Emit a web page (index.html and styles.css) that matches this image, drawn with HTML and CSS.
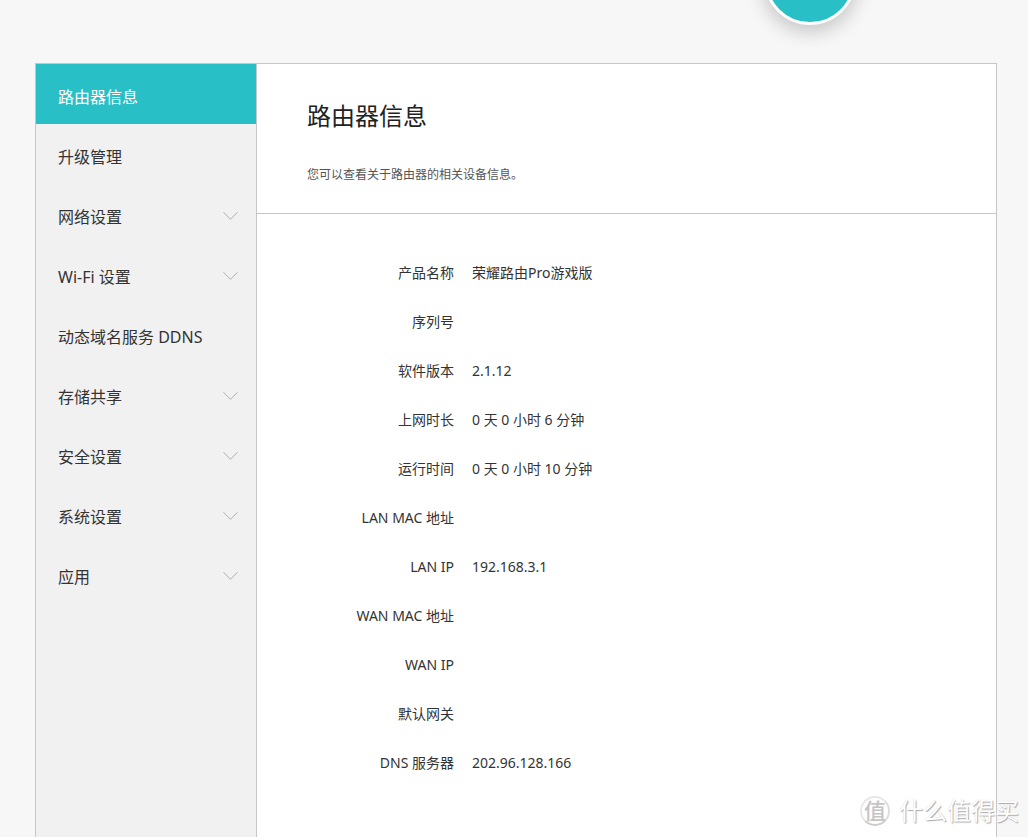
FILE: index.html
```html
<!DOCTYPE html>
<html lang="zh-CN">
<head>
<meta charset="utf-8">
<title>路由器信息</title>
<meta name="viewport" content="width=device-width, initial-scale=1">
<link rel="stylesheet" href="styles.css">
</head>
<body>
<svg class="sprite" aria-hidden="true">
  <symbol id="chevron" viewBox="0 0 16 10"><path d="M0.5 1 L8 8.5 L15.5 1" fill="none" stroke="currentColor"/></symbol>
</svg>
<span class="nav-circle"></span>
<div class="panel">
  <nav class="sidebar">
    <a class="item active" href="#info">路由器信息</a>
    <a class="item" href="#upgrade">升级管理</a>
    <a class="item" href="#network">网络设置<svg class="chevron"><use href="#chevron"/></svg></a>
    <a class="item" href="#wifi">Wi-Fi 设置<svg class="chevron"><use href="#chevron"/></svg></a>
    <a class="item" href="#ddns">动态域名服务 DDNS</a>
    <a class="item" href="#storage">存储共享<svg class="chevron"><use href="#chevron"/></svg></a>
    <a class="item" href="#security">安全设置<svg class="chevron"><use href="#chevron"/></svg></a>
    <a class="item" href="#system">系统设置<svg class="chevron"><use href="#chevron"/></svg></a>
    <a class="item" href="#apps">应用<svg class="chevron"><use href="#chevron"/></svg></a>
  </nav>
  <main class="content">
    <header class="intro">
      <h1 class="title">路由器信息</h1>
      <p class="desc">您可以查看关于路由器的相关设备信息。</p>
    </header>
    <table class="info">
      <tr><th scope="row">产品名称</th><td>荣耀路由Pro游戏版</td></tr>
      <tr><th scope="row">序列号</th><td></td></tr>
      <tr><th scope="row">软件版本</th><td>2.1.12</td></tr>
      <tr><th scope="row">上网时长</th><td>0 天 0 小时 6 分钟</td></tr>
      <tr><th scope="row">运行时间</th><td>0 天 0 小时 10 分钟</td></tr>
      <tr><th scope="row">LAN MAC 地址</th><td></td></tr>
      <tr><th scope="row">LAN IP</th><td>192.168.3.1</td></tr>
      <tr><th scope="row">WAN MAC 地址</th><td></td></tr>
      <tr><th scope="row">WAN IP</th><td></td></tr>
      <tr><th scope="row">默认网关</th><td></td></tr>
      <tr><th scope="row">DNS 服务器</th><td>202.96.128.166</td></tr>
    </table>
  </main>
</div>
<div class="watermark">
  <span class="seal">值</span>
  <span class="brand">什么值得买</span>
</div>
</body>
</html>
```
FILE: styles.css
```css
* { box-sizing: border-box; }
body {
  margin: 0;
  min-height: 100vh;
  display: flex;
  flex-direction: column;
  padding: 63px 31px 0 35px;
  background: #f7f7f7;
  color: #333;
  font-family: "Noto Sans", "Noto Sans CJK SC", sans-serif;
  font-size: 14px;
  position: relative;
  overflow-x: hidden;
}
.sprite { display: none; }
.nav-circle {
  position: absolute;
  top: -67px;
  right: 172px;
  width: 92px;
  height: 92px;
  border: 3px solid #fff;
  border-radius: 50%;
  background: #28bfc7;
  box-shadow: 0 6px 20px rgba(0, 0, 0, .22);
}
.panel {
  flex: 1;
  display: flex;
  border: 1px solid #c6c6c6;
  border-bottom: 0;
  background: #fff;
}
.sidebar {
  flex: none;
  width: 221px;
  border-right: 1px solid #c6c6c6;
  background: #f1f1f1;
}
.item {
  display: flex;
  align-items: center;
  justify-content: space-between;
  height: 60px;
  padding: 6px 18px 0 22px;
  font-size: 16px;
  line-height: 24px;
  color: #333;
  text-decoration: none;
}
.item.active { background: #28bfc7; color: #fff; }
.chevron { width: 15px; height: 10px; margin-bottom: 2px; color: #aaa; }
.content { flex: 1; min-width: 0; }
.intro {
  padding: 34px 50px 29px;
  border-bottom: 1px solid #c6c6c6;
}
.title {
  margin: 0 0 31px;
  font-size: 24px;
  line-height: 36px;
  font-weight: 400;
  color: #222;
}
.desc {
  margin: 0;
  font-size: 12px;
  line-height: 19px;
  color: #555;
}
.info {
  width: 100%;
  margin-top: 34px;
  border-collapse: collapse;
  table-layout: fixed;
  line-height: 21px;
}
.info th, .info td { height: 49px; padding: 0; font-weight: 400; }
.info th { width: 197px; text-align: right; }
.info td { padding-left: 18px; }
.watermark {
  position: absolute;
  right: 9px;
  bottom: 9px;
  display: flex;
  align-items: center;
  gap: 9px;
  color: #fff;
  text-shadow: 1px 1px 1px #aaa, 0 0 1px #ccc;
}
.seal {
  width: 30px;
  height: 30px;
  border: 2px solid #e8e8e8;
  border-right-color: #ddd;
  border-bottom-color: #ccc;
  border-radius: 50%;
  color: #c4c4c4;
  font-size: 22px;
  font-weight: 500;
  line-height: 24px;
  text-align: center;
  text-shadow: none;
}
.brand { font-size: 24px; line-height: 34px; }
```
